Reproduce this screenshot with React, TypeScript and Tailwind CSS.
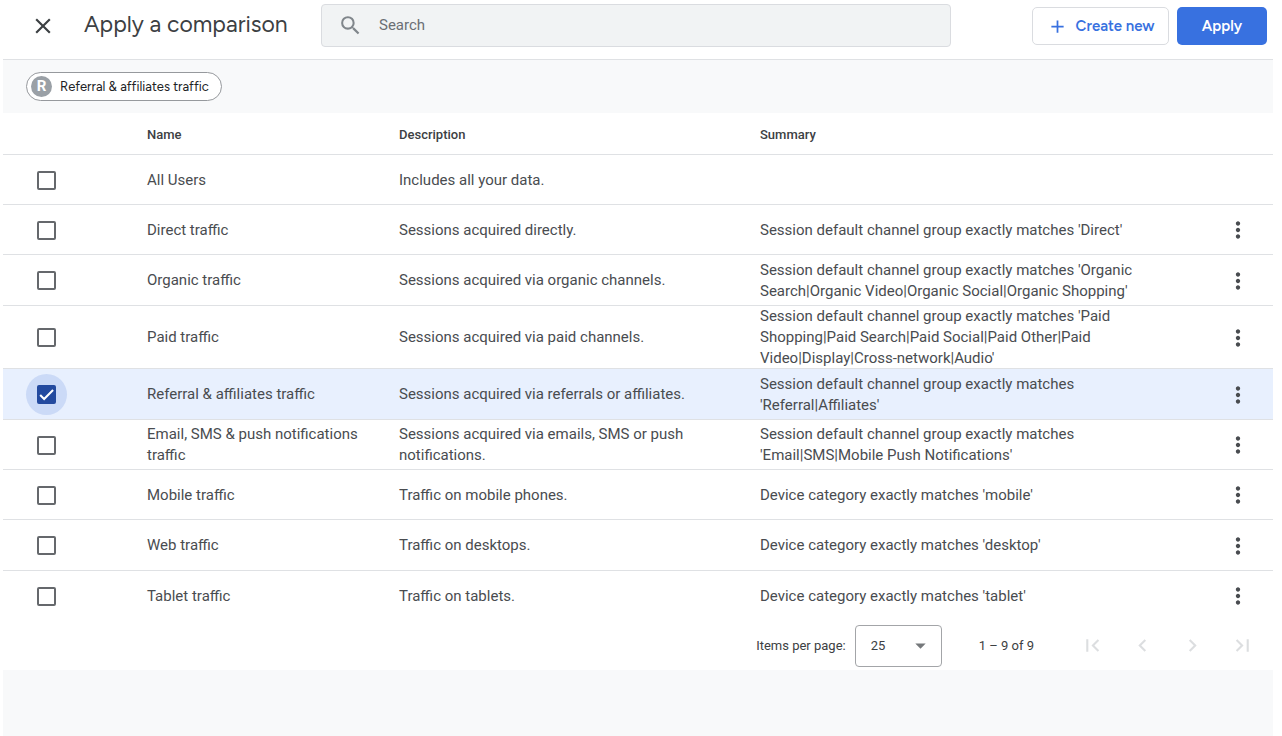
import { useState } from 'react';
import {
  MdAdd,
  MdArrowDropDown,
  MdChevronLeft,
  MdChevronRight,
  MdClose,
  MdFirstPage,
  MdLastPage,
  MdMoreVert,
  MdSearch,
} from 'react-icons/md';

type Comparison = {
  name: string;
  description: string;
  summary: string;
  rowHeight: string;
};

const comparisons: Comparison[] = [
  { name: 'All Users', description: 'Includes all your data.', summary: '', rowHeight: 'h-[50px]' },
  {
    name: 'Direct traffic',
    description: 'Sessions acquired directly.',
    summary: "Session default channel group exactly matches 'Direct'",
    rowHeight: 'h-[50px]',
  },
  {
    name: 'Organic traffic',
    description: 'Sessions acquired via organic channels.',
    summary:
      "Session default channel group exactly matches 'Organic Search|Organic Video|Organic Social|Organic Shopping'",
    rowHeight: 'h-[51px]',
  },
  {
    name: 'Paid traffic',
    description: 'Sessions acquired via paid channels.',
    summary:
      "Session default channel group exactly matches 'Paid Shopping|Paid Search|Paid Social|Paid Other|Paid Video|Display|Cross-network|Audio'",
    rowHeight: 'h-[51px]',
  },
  {
    name: 'Referral & affiliates traffic',
    description: 'Sessions acquired via referrals or affiliates.',
    summary: "Session default channel group exactly matches 'Referral|Affiliates'",
    rowHeight: 'h-[51px]',
  },
  {
    name: 'Email, SMS & push notifications traffic',
    description: 'Sessions acquired via emails, SMS or push notifications.',
    summary: "Session default channel group exactly matches 'Email|SMS|Mobile Push Notifications'",
    rowHeight: 'h-[50px]',
  },
  {
    name: 'Mobile traffic',
    description: 'Traffic on mobile phones.',
    summary: "Device category exactly matches 'mobile'",
    rowHeight: 'h-[50px]',
  },
  {
    name: 'Web traffic',
    description: 'Traffic on desktops.',
    summary: "Device category exactly matches 'desktop'",
    rowHeight: 'h-[51px]',
  },
  {
    name: 'Tablet traffic',
    description: 'Traffic on tablets.',
    summary: "Device category exactly matches 'tablet'",
    rowHeight: 'h-[50px]',
  },
];

function Header() {
  return (
    <header className="flex items-start border-b border-[#dfe1e4] pt-1 pb-3 pr-[6px] pl-[27px]">
      <button type="button" aria-label="Close" className="mt-[9px] text-[#3c4043]">
        <MdClose size={26} />
      </button>
      <h1 className="ml-7 mt-1 w-[237px] shrink-0 font-['Figtree','Inter',sans-serif] text-[23px] leading-8 whitespace-nowrap text-[#3c4043]">
        Apply a comparison
      </h1>
      <label className="flex h-[43px] min-w-0 flex-1 items-center gap-4 rounded-[4px] border border-[#dadce0] bg-[#f1f3f4] pl-4">
        <MdSearch size={25} className="shrink-0 text-[#80868b]" />
        <input
          type="search"
          aria-label="Search"
          placeholder="Search"
          className="min-w-0 flex-1 bg-transparent text-[15px] text-[#3c4043] outline-none placeholder:text-[#6b6f74]"
        />
      </label>
      <div className="mt-[3px] ml-[81px] flex shrink-0 gap-2 font-['Figtree','Inter',sans-serif] text-[15px] font-semibold">
        <button
          type="button"
          className="flex h-[38px] w-[137px] items-center justify-center gap-2 rounded-[5px] border border-[#dadce0] text-[#3871e0]"
        >
          <MdAdd size={21} />
          Create new
        </button>
        <button type="button" className="h-[38px] w-[90px] rounded-[5px] bg-[#3871e0] text-white">
          Apply
        </button>
      </div>
    </header>
  );
}

function SelectedChips({ names }: { names: string[] }) {
  return (
    <div className="flex min-h-[53px] items-center gap-2 bg-[#f8f9fa] px-[23px]">
      {names.map((name) => (
        <span
          key={name}
          className="flex h-[29px] items-center gap-2 rounded-full border border-[#96999d] bg-white pr-3 pl-1 font-['Figtree','Inter',sans-serif] text-[13px] text-[#202124]"
        >
          <span className="flex size-[21px] items-center justify-center rounded-full bg-[#9aa0a6] font-['Roboto',sans-serif] text-[15px] font-bold text-white">
            {name[0]}
          </span>
          {name}
        </span>
      ))}
    </div>
  );
}

function RowCheckbox({ name, checked, onChange }: { name: string; checked: boolean; onChange: () => void }) {
  return (
    <label
      className={`ml-[23px] grid size-[41px] place-items-center rounded-full ${checked ? 'bg-[#cbdaf7]' : ''}`}
    >
      <input
        type="checkbox"
        aria-label={name}
        checked={checked}
        onChange={onChange}
        className="col-start-1 row-start-1 size-[19px] appearance-none rounded-[2px] border-2 border-[#65686c] checked:border-[#234a9f] checked:bg-[#234a9f]"
      />
      {checked && (
        <svg
          viewBox="0 0 24 24"
          className="pointer-events-none col-start-1 row-start-1 size-[19px] fill-none stroke-white stroke-[2.6]"
        >
          <path d="M4 12.7 9 17.7 20.3 6.4" />
        </svg>
      )}
    </label>
  );
}

function Paginator() {
  const pages = [
    { label: 'First page', Icon: MdFirstPage },
    { label: 'Previous page', Icon: MdChevronLeft },
    { label: 'Next page', Icon: MdChevronRight },
    { label: 'Last page', Icon: MdLastPage },
  ];
  return (
    <div className="flex h-[49px] items-center justify-end pr-[6px] text-[13px] text-[#3c4043]">
      <label htmlFor="page-size" className="mr-[9px]">
        Items per page:
      </label>
      <span className="grid items-center">
        <select
          id="page-size"
          defaultValue="25"
          className="col-start-1 row-start-1 h-[42px] w-[87px] appearance-none rounded-[4px] border border-[#a3a5a8] bg-white pl-[15px] text-[13px]"
        >
          <option>10</option>
          <option>25</option>
          <option>50</option>
        </select>
        <MdArrowDropDown
          size={25}
          className="pointer-events-none col-start-1 row-start-1 mr-[9px] justify-self-end text-[#75787b]"
        />
      </span>
      <span className="mr-[33px] ml-[37px]">1 – 9 of 9</span>
      {pages.map(({ label, Icon }) => (
        <button
          key={label}
          type="button"
          aria-label={label}
          disabled
          className="grid size-[50px] place-items-center text-[#dcdee0]"
        >
          <Icon size={25} />
        </button>
      ))}
    </div>
  );
}

export default function App() {
  const [selected, setSelected] = useState<string[]>(['Referral & affiliates traffic']);
  const toggle = (name: string) =>
    setSelected((current) =>
      current.includes(name) ? current.filter((item) => item !== name) : [...current, name],
    );

  return (
    <div className="flex min-h-screen flex-col bg-white pr-[9px] pl-[3px] font-['Roboto',sans-serif] text-[#3c4043]">
      <Header />
      <SelectedChips names={selected} />
      <main>
        <table className="w-full table-fixed border-collapse text-left text-[15px] leading-[21px] text-[#494c50]">
          <thead>
            <tr className="h-[42px] text-[13px] text-[#3c4043] shadow-[inset_0_-1px_0_#dfe1e4]">
              <td className="w-36" />
              <th scope="col" className="w-[252px] font-medium">
                Name
              </th>
              <th scope="col" className="w-[361px] font-medium">
                Description
              </th>
              <th scope="col" className="font-medium">
                Summary
              </th>
              <td className="w-[70px]" />
            </tr>
          </thead>
          <tbody>
            {comparisons.map(({ name, description, summary, rowHeight }) => {
              const checked = selected.includes(name);
              return (
                <tr
                  key={name}
                  className={`${rowHeight} shadow-[inset_0_-1px_0_#dfe1e4] last:shadow-none ${checked ? 'bg-[#e8f0fe]' : ''}`}
                >
                  <td>
                    <RowCheckbox name={name} checked={checked} onChange={() => toggle(name)} />
                  </td>
                  <td className="pr-8">{name}</td>
                  <td className="pr-12">{description}</td>
                  <td className="pr-10">{summary}</td>
                  <td>
                    {summary && (
                      <button
                        type="button"
                        aria-label={`More options for ${name}`}
                        className="ml-[15px] grid size-10 place-items-center"
                      >
                        <MdMoreVert size={26} />
                      </button>
                    )}
                  </td>
                </tr>
              );
            })}
          </tbody>
        </table>
        <Paginator />
      </main>
      <div className="flex-1 bg-[#f8f9fa]" />
    </div>
  );
}
